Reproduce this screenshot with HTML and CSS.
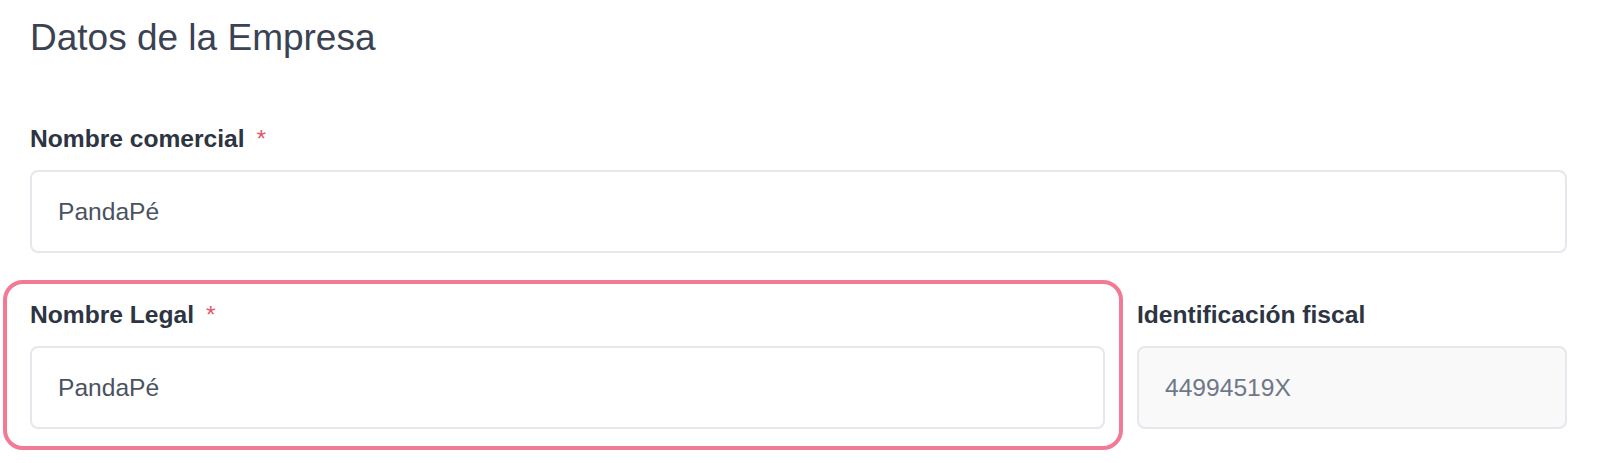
FILE: index.html
```html
<!DOCTYPE html>
<html lang="es">
<head>
<meta charset="utf-8">
<title>Datos de la Empresa</title>
<link rel="stylesheet" href="styles.css">
</head>
<body>
<section class="company">
  <h2 class="title">Datos de la Empresa</h2>
  <div class="field field-first">
    <label class="label">Nombre comercial<span class="req">*</span></label>
    <div class="input">PandaPé</div>
  </div>
  <div class="row">
    <div class="field highlighted">
      <label class="label">Nombre Legal<span class="req">*</span></label>
      <div class="input">PandaPé</div>
    </div>
    <div class="field">
      <label class="label">Identificación fiscal</label>
      <div class="input disabled">44994519X</div>
    </div>
  </div>
</section>
</body>
</html>
```
FILE: styles.css
```css
html, body {
  margin: 0;
  padding: 0;
  background: #ffffff;
}
body {
  font-family: "Liberation Sans", Arial, sans-serif;
}
.company {
  padding: 17px 47px 30px 30px;
}
.title {
  margin: 0;
  font-size: 37px;
  line-height: 42px;
  font-weight: normal;
  color: #3a4253;
}
.field-first {
  margin-top: 66px;
}
.label {
  display: block;
  font-size: 24.6px;
  line-height: 28px;
  font-weight: bold;
  color: #2d3442;
}
.req {
  margin-left: 12px;
  font-weight: normal;
  color: #e15a6c;
}
.input {
  margin-top: 17px;
  height: 83px;
  box-sizing: border-box;
  border: 2px solid #e6e7ec;
  border-radius: 8px;
  padding: 0 26px;
  display: flex;
  align-items: center;
  font-size: 24.6px;
  color: #4a5262;
  background: #ffffff;
}
.input.disabled {
  background: #f9f9fa;
  color: #6f7788;
}
.row {
  margin-top: 48px;
  display: grid;
  grid-template-columns: minmax(0, 1075fr) minmax(0, 430fr);
  column-gap: 32px;
}
.highlighted {
  position: relative;
}
.highlighted::before {
  content: "";
  position: absolute;
  top: -21px;
  bottom: -21px;
  left: -27px;
  right: -18px;
  border: 4px solid #f27a94;
  border-radius: 20px;
  pointer-events: none;
}
```
